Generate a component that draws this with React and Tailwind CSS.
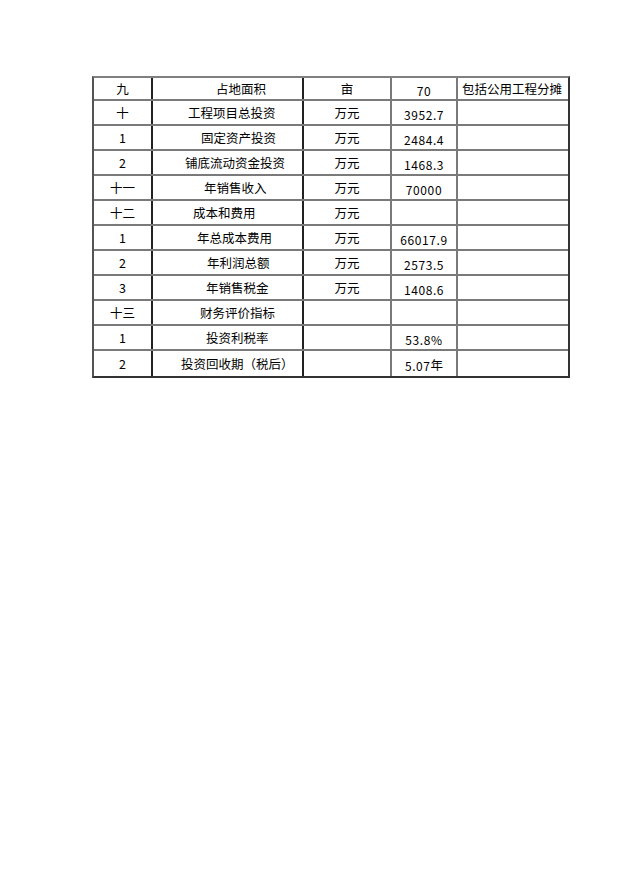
import React from "react";

const rows = [
  { a: "九", b: "占地面积", bp: "pl-[63px]", c: "亩", d: "70", e: "包括公用工程分摊" },
  { a: "十", b: "工程项目总投资", bp: "pl-[35px]", c: "万元", d: "3952.7" },
  { a: "1", b: "固定资产投资", bp: "pl-[48px]", c: "万元", d: "2484.4" },
  { a: "2", b: "铺底流动资金投资", bp: "pl-[32px]", c: "万元", d: "1468.3" },
  { a: "十一", b: "年销售收入", bp: "pl-[51px]", c: "万元", d: "70000" },
  { a: "十二", b: "成本和费用", bp: "pl-[40px]", c: "万元", d: "" },
  { a: "1", b: "年总成本费用", bp: "pl-[44px]", c: "万元", d: "66017.9" },
  { a: "2", b: "年利润总额", bp: "pl-[54px]", c: "万元", d: "2573.5" },
  { a: "3", b: "年销售税金", bp: "pl-[53px]", c: "万元", d: "1408.6" },
  { a: "十三", b: "财务评价指标", bp: "pl-[47px]", c: "", d: "" },
  { a: "1", b: "投资利税率", bp: "pl-[53px]", c: "", d: "53.8%" },
  { a: "2", b: "投资回收期（税后）", bp: "pl-[28px]", c: "", d: "5.07年" },
];

const cjk = { fontFamily: '"Noto Sans CJK SC", "Noto Sans", sans-serif' };

function Num({ s }) {
  const parts = s.split(/([0-9.%]+)/).filter(Boolean);
  return (
    <>
      {parts.map((p, i) =>
        /^[0-9.%]+$/.test(p) ? (
          <span key={i} className="text-[12px] tracking-[0.6px]">{p}</span>
        ) : (
          <span key={i} className="text-[12.5px]">{p}</span>
        )
      )}
    </>
  );
}

export default function App() {
  return (
    <div style={cjk} className="min-h-[878px] w-[621px] bg-white pt-[76px] pl-[92px]">
      <div className="w-[478px] border-t-2 border-l-2 border-r-2 border-b-2 border-t-[#808080] border-l-[#555] border-r-[#333] border-b-[#333] text-black">
        {rows.map((r, i) => (
          <div
            key={i}
            className={`grid grid-cols-[59px_151px_88px_66px_110px] ${i === 0 ? "h-[23px]" : "h-[25px]"} ${i < rows.length - 1 ? "border-b-2 border-b-[#7a7a7a]" : ""}`}
          >
            <div className="flex items-center justify-center border-r-2 border-r-[#222] pt-[2px] leading-none text-[12.5px]">
              {r.a}
            </div>
            <div className={`flex items-center border-r-2 border-r-[#222] pt-[2px] leading-none text-[12.5px] ${r.bp}`}>
              {r.b}
            </div>
            <div className="flex items-center justify-center border-r-2 border-r-[#7a7a7a] pt-[2px] leading-none text-[12.5px]">
              {r.c}
            </div>
            <div className="flex items-center justify-center border-r-2 border-r-[#7a7a7a] pt-[4px] leading-none">
              <Num s={r.d} />
            </div>
            <div className="flex items-center pl-[4px] pt-[2px] leading-none text-[12.5px]">
              {r.e || null}
            </div>
          </div>
        ))}
      </div>
    </div>
  );
}
